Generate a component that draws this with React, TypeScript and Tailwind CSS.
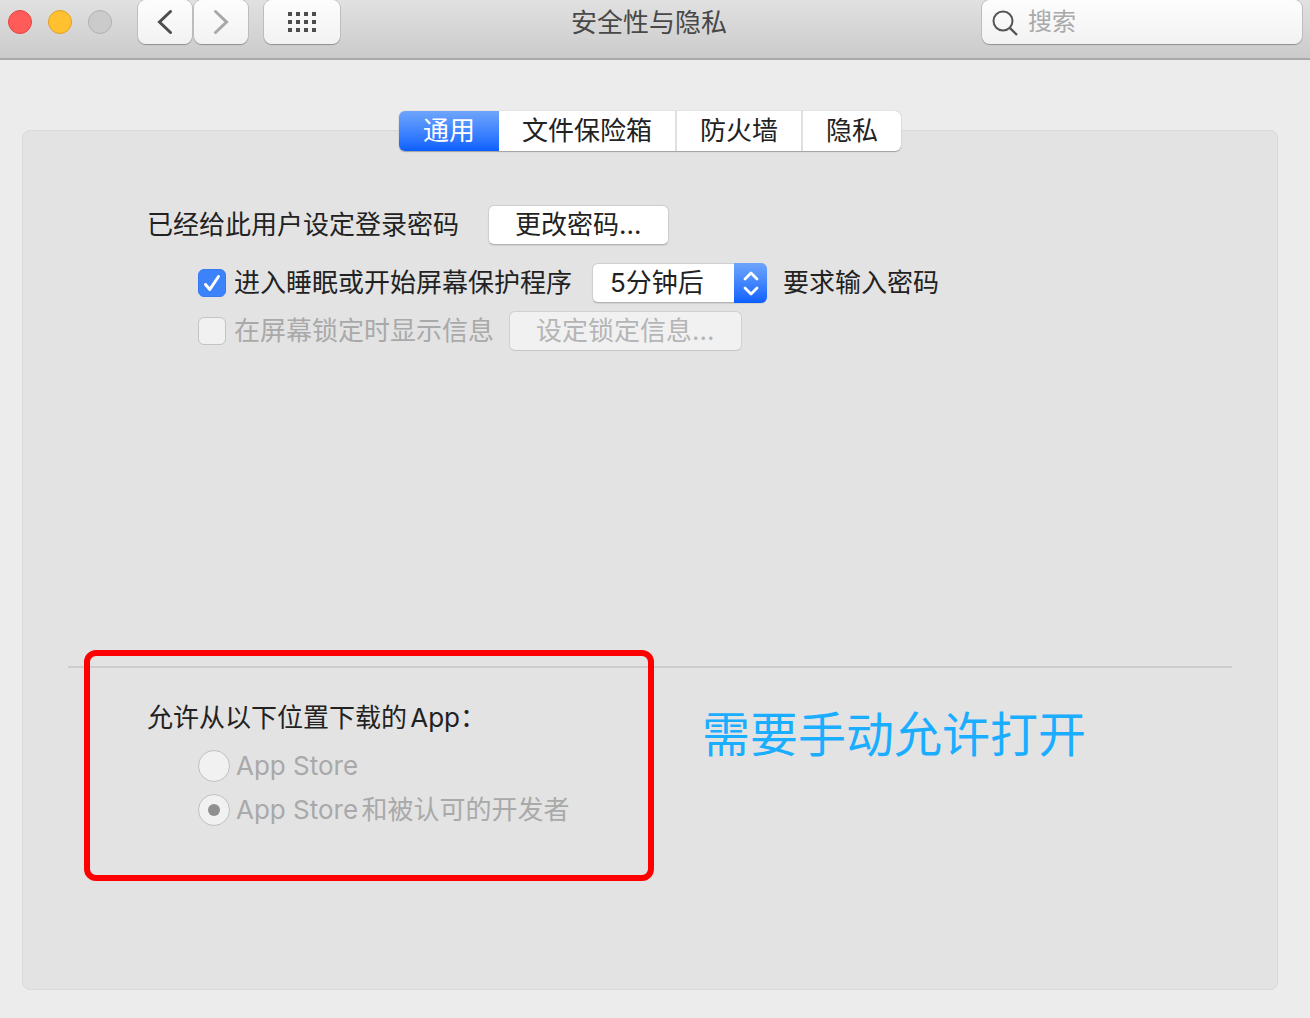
import type { ReactNode } from "react";

const tabs = ["通用", "文件保险箱", "防火墙", "隐私"];

const sources = [
  { id: "app-store", label: "App Store", checked: false },
  { id: "identified", label: "App Store和被认可的开发者", checked: true },
];

function ToolbarButton({ label, className, children }: { label: string; className: string; children: ReactNode }) {
  return (
    <button
      type="button"
      aria-label={label}
      className={`flex h-11 items-center justify-center rounded-lg bg-linear-to-b from-[#fdfdfd] to-[#f2f2f2] shadow-[0_1px_1px_#8f8f8f,0_0_0_1px_#c3c3c3] ${className}`}
    >
      {children}
    </button>
  );
}

function Toolbar() {
  return (
    <header className="flex h-15 items-start border-b-2 border-[#a9a9a9] bg-linear-to-b from-[#e1e1e1] to-[#cbcbcb] px-2">
      <div className="flex h-11 items-center gap-4">
        <button type="button" aria-label="关闭" className="size-6 rounded-full border border-[#e2463f] bg-[#ff5b59]" />
        <button type="button" aria-label="最小化" className="size-6 rounded-full border border-[#e0a023] bg-[#ffc130]" />
        <button type="button" aria-label="缩放" disabled className="size-6 rounded-full border border-[#b0b0b0] bg-[#cbcbcb]" />
      </div>
      <nav className="ml-[26px] flex gap-0.5">
        <ToolbarButton label="后退" className="w-[54px]">
          <svg width="16" height="26" viewBox="0 0 16 26" fill="none" stroke="#4d4d4d" strokeWidth="3" strokeLinecap="round">
            <path d="M13.5 2.5 2.5 13l11 10.5" />
          </svg>
        </ToolbarButton>
        <ToolbarButton label="前进" className="w-[54px]">
          <svg width="16" height="26" viewBox="0 0 16 26" fill="none" stroke="#a8a8a8" strokeWidth="3" strokeLinecap="round">
            <path d="m2.5 2.5 11 10.5-11 10.5" />
          </svg>
        </ToolbarButton>
      </nav>
      <div className="ml-4">
        <ToolbarButton label="显示全部" className="w-19">
          <svg width="28" height="20" viewBox="0 0 28 20" fill="#4d4d4d">
            {[0, 8, 16].map((y) =>
              [0, 8, 16, 24].map((x) => <rect key={`${x}-${y}`} x={x} y={y} width="4" height="4" />)
            )}
          </svg>
        </ToolbarButton>
      </div>
      <h1 className="flex-1 pr-6 text-center leading-[46px] text-[#484848]">安全性与隐私</h1>
      <label className="flex h-11 w-80 items-center gap-2 rounded-lg bg-linear-to-b from-[#fdfdfd] to-[#f2f2f2] px-2.5 shadow-[0_1px_1px_#8f8f8f,0_0_0_1px_#c3c3c3]">
        <svg width="28" height="28" viewBox="0 0 28 28" fill="none" stroke="#555" strokeWidth="2" className="shrink-0">
          <circle cx="11" cy="13" r="9.5" />
          <path d="m17.8 19.8 7.2 7.2" strokeWidth="2.4" />
        </svg>
        <input
          type="search"
          aria-label="搜索"
          placeholder="搜索"
          className="w-full min-w-0 bg-transparent text-2xl outline-none placeholder:text-[#a9a9a9]"
        />
      </label>
    </header>
  );
}

function Tabs() {
  return (
    <div
      role="tablist"
      className="mx-auto -mt-5 flex h-10 w-fit overflow-hidden rounded-md bg-white shadow-[0_1px_1px_#a0a0a0,0_0_1px_#a0a0a0]"
    >
      {tabs.map((tab, i) => (
        <button
          key={tab}
          type="button"
          role="tab"
          aria-selected={i === 0}
          className={
            i === 0
              ? "bg-linear-to-b from-[#6ea5fb] to-[#0a5fff] px-6 leading-10 text-white"
              : "border-[#e0e0e0] px-[23px] leading-10 not-last:border-r-2"
          }
        >
          {tab}
        </button>
      ))}
    </div>
  );
}

function PasswordSettings() {
  return (
    <div className="mt-[54px] pl-[79px]">
      <div className="flex items-center gap-[29px]">
        <p>已经给此用户设定登录密码</p>
        <button
          type="button"
          className="h-10 rounded-md border border-[#cfcfcf] border-b-[#b4b4b4] bg-white px-[26px] shadow-[0_1px_1px_#cfcfcf]"
        >
          更改密码…
        </button>
      </div>

      <div className="mt-[18px] flex items-center pl-[51px]">
        <span className="relative flex size-7">
          <input
            id="require-password"
            type="checkbox"
            defaultChecked
            className="peer size-7 appearance-none rounded-md border border-[#bdbdbd] bg-[#f1f1f1] checked:border-[#367cf0] checked:bg-[#3b82fb]"
          />
          <svg
            viewBox="0 0 28 28"
            fill="none"
            stroke="white"
            strokeWidth="3"
            strokeLinecap="round"
            strokeLinejoin="round"
            className="pointer-events-none absolute inset-0 hidden peer-checked:block"
          >
            <path d="m7.5 15.5 4.3 5L20.5 7.5" />
          </svg>
        </span>
        <label htmlFor="require-password" className="ml-2">
          进入睡眠或开始屏幕保护程序
        </label>
        <span className="relative ml-5 flex">
          <select
            aria-label="要求输入密码的时间"
            className="h-10 w-[175px] appearance-none rounded-md border border-[#cfcfcf] border-b-[#b4b4b4] bg-white pl-[17px] shadow-[0_1px_1px_#cfcfcf] [text-autospace:normal]"
          >
            <option>5分钟后</option>
          </select>
          <span className="pointer-events-none absolute inset-y-0 right-0 flex w-[33px] items-center justify-center rounded-r-md bg-linear-to-b from-[#6ea5fb] to-[#0a5fff]">
            <svg
              width="16"
              height="26"
              viewBox="0 0 16 26"
              fill="none"
              stroke="white"
              strokeWidth="2.8"
              strokeLinecap="round"
              strokeLinejoin="round"
            >
              <path d="m2 9 6-6 6 6M2 18l6 6 6-6" />
            </svg>
          </span>
        </span>
        <span className="ml-4">要求输入密码</span>
      </div>

      <div className="mt-2 flex items-center pl-[51px] text-[#a9a9a9]">
        <input
          id="lock-message"
          type="checkbox"
          disabled
          className="size-7 appearance-none rounded-md border border-[#c3c3c3] bg-[#f1f1f1]"
        />
        <label htmlFor="lock-message" className="ml-2">
          在屏幕锁定时显示信息
        </label>
        <button
          type="button"
          disabled
          className="ml-[15px] h-10 rounded-md border border-[#d0d0d0] border-b-[#c6c6c6] bg-[#f1f1f1] px-[26px] text-[#b5b5b5]"
        >
          设定锁定信息…
        </button>
      </div>
    </div>
  );
}

function DownloadSettings() {
  return (
    <div className="mt-auto">
      <hr className="border-t-2 border-[#cdcdcd]" />
      <div className="-mt-[18px] ml-4 flex items-start gap-12">
        <fieldset className="w-[570px] rounded-xl border-6 border-[#fe0000] pt-[42px] pb-[49px] pl-[57px]">
          <p id="sources-title" className="leading-10 [text-autospace:normal]">
            允许从以下位置下载的App：
          </p>
          <div role="radiogroup" aria-labelledby="sources-title" className="mt-3 flex flex-col gap-3 pl-[51px]">
            {sources.map((source) => (
              <div key={source.id} className="flex h-8 items-center gap-1.5 text-[#a9a9a9]">
                <input
                  id={source.id}
                  type="radio"
                  name="source"
                  disabled
                  defaultChecked={source.checked}
                  className="grid size-8 appearance-none place-items-center rounded-full border border-[#c0c0c0] bg-[#f1f1f1] before:size-3 before:rounded-full checked:before:bg-[#8f8f8f]"
                />
                <label htmlFor={source.id} className="[text-autospace:normal]">
                  {source.label}
                </label>
              </div>
            ))}
          </div>
        </fieldset>
        <p className="pt-[49px] text-5xl leading-[72px] text-[#1badff]">需要手动允许打开</p>
      </div>
    </div>
  );
}

export default function App() {
  return (
    <div
      lang="zh-CN"
      className="flex min-h-screen flex-col bg-[#ececec] font-[Inter,'Noto_Sans_CJK_SC',sans-serif] text-[26px] leading-8 text-[#222]"
    >
      <Toolbar />
      <main className="mt-[70px] mr-8 mb-7 ml-[22px] flex flex-1 flex-col rounded-lg border border-[#d9d9d9] bg-[#e3e3e3] px-[45px] pb-27">
        <Tabs />
        <PasswordSettings />
        <DownloadSettings />
      </main>
    </div>
  );
}
